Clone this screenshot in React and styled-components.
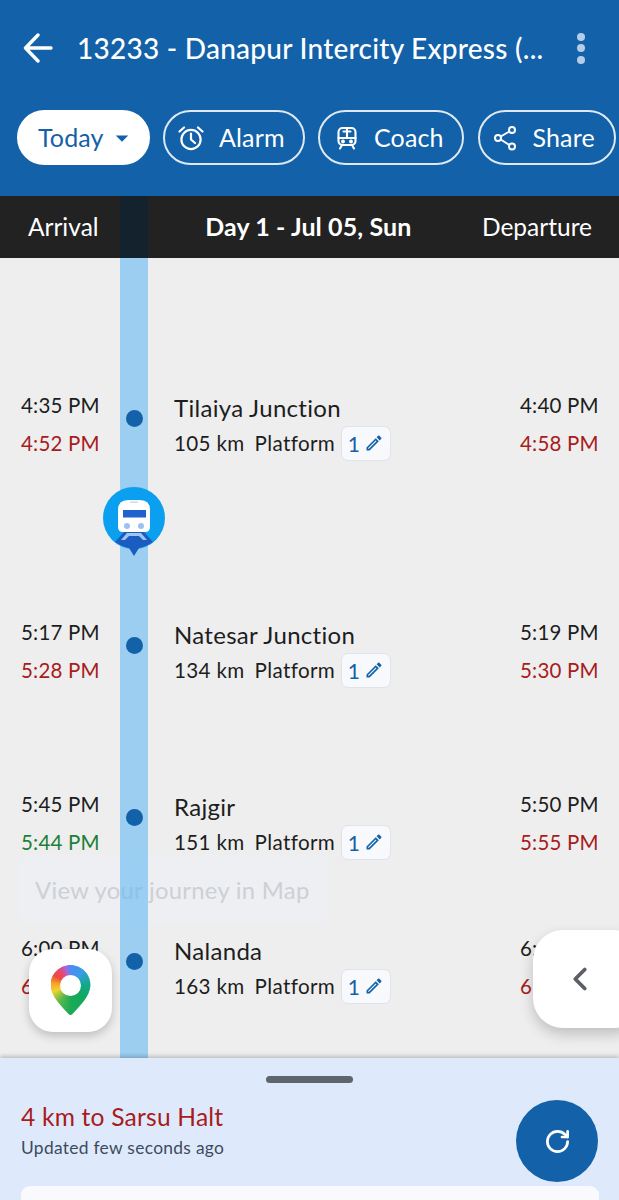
import React from "react";
import styled, { createGlobalStyle } from "styled-components";
import { RotateCw, ChevronLeft } from "lucide-react";
import { MdOutlineEdit, MdArrowDropDown } from "react-icons/md";

const Global = createGlobalStyle`
  html, body { margin: 0; padding: 0; background: #eee; }
  * { box-sizing: border-box; }
`;
const Page = styled.div`
  position: relative; width: 619px; height: 1200px; overflow: hidden;
  background: #eee; font-family: "Lato", "Noto Sans", sans-serif; color: #1d1d1d;
  display: flex; flex-direction: column;
`;
const Header = styled.header`
  height: 196px; background: #1361a8; color: #fff; flex: none;
`;
const TitleBar = styled.div`
  height: 110px; display: flex; align-items: center; padding: 0 0 14px 23px;
`;
const Title = styled.h1`
  margin: 0 0 0 24px; width: 470px; font-size: 28px; font-weight: 500; white-space: nowrap; letter-spacing: .25px;
`;
const Dots = styled.div`
  margin-left: 30px; display: flex; flex-direction: column; gap: 3.5px;
  i { width: 8px; height: 8px; border-radius: 50%; background: #b5cde6; display: block; }
`;
const Pills = styled.div`
  display: flex; padding-left: 17px; gap: 13.5px; height: 55px;
`;
const Pill = styled.div`
  height: 55px; width: ${p => p.$w}px; flex: none; border-radius: 28px;
  display: flex; align-items: center; padding: 0 0 2px ${p => p.$pad}px; gap: ${p => p.$gap}px;
  font-size: 25px; letter-spacing: .15px;
  border: 2px solid ${p => p.$solid ? "#fff" : "#dfe9f4"};
  background: ${p => p.$solid ? "#fff" : "transparent"};
  color: ${p => p.$solid ? "#1361a8" : "#fff"};
  svg { flex: none; margin-top: 2px; }
`;
const DayBar = styled.div`
  height: 62px; flex: none; background: #222; color: #fff; display: flex; align-items: center;
  justify-content: space-between; padding: 0 27px 2px 28px; font-size: 24.5px;
  b { font-weight: 700; font-size: 25px; margin-left: 36px; letter-spacing: .1px; }
`;
const Timeline = styled.main`
  flex: 1; position: relative; padding-top: 135px;
`;
const Rail = styled.div`
  position: absolute; left: 120px; width: 28px; top: 196px; height: 862px; z-index: 2;
  background: rgba(104,186,240,.62);
  &::before { content: ""; position: absolute; left: 0; right: 0; top: 0; height: 62px; background: #14222d; }
`;
const Row = styled.section`
  height: 62px; margin-bottom: ${p => p.$after}px; display: grid;
  grid-template-columns: 121px 27px 1fr 110px; position: relative; z-index: 3;
`;
const Times = styled.div`
  display: flex; flex-direction: column; gap: 13px; font-size: 20.5px; line-height: 25px;
  padding-left: ${p => p.$left}px; letter-spacing: .2px; white-space: nowrap;
`;
const Late = styled.span`
  color: ${p => p.$ok ? "#1b7f39" : "#a81c1c"};
`;
const DotCell = styled.div`
  display: flex; justify-content: center; padding-top: 17px;
  i { width: 17px; height: 17px; background: #1361a8; border-radius: 50%; display: block; }
`;
const Info = styled.div`
  padding-left: 26px;
`;
const Station = styled.div`
  font-size: 24px; line-height: 30px; letter-spacing: .3px;
`;
const Meta = styled.div`
  display: flex; align-items: center; margin-top: 3px; font-size: 20.6px; letter-spacing: .35px; height: 34px;
  span + span { margin-left: 10px; }
`;
const Platform = styled.div`
  margin-left: 6px; width: 50px; height: 35px; border-radius: 7px; background: #f8f9fc; border: 1.5px solid #dfe3ea;
  color: #1361a8; display: flex; align-items: center; justify-content: center; gap: 4px; font-size: 21px;
`;
const Marker = styled.svg`
  position: absolute; left: 102px; top: 486px; z-index: 4;
`;
const Toast = styled.div`
  position: absolute; left: 18px; top: 855px; width: 311px; height: 70px; border-radius: 12px;
  background: #edeff3; color: #cdd0d4; font-size: 23.8px; display: flex; align-items: center; padding-left: 17px;
  letter-spacing: .3px; z-index: 1;
`;
const MapBtn = styled.div`
  position: absolute; left: 29px; top: 949px; width: 83px; height: 83px; border-radius: 24px;
  background: #fff; box-shadow: 0 4px 10px rgba(0,0,0,.2); z-index: 4; display: flex; align-items: center; justify-content: center;
`;
const PinShape = styled.div`
  position: relative; width: 40px; height: 50px; margin-top: -1px;
  clip-path: path("M20 0 C31 0 40 9 40 20 C40 31 29 41 22 49 Q20 51 18 49 C11 41 0 31 0 20 C0 9 9 0 20 0Z");
  background: conic-gradient(from 0deg at 20px 20px, #4a8df2 0deg, #3b9be6 40deg, #14a890 85deg, #10a860 130deg, #1aaa55 180deg, #5eb84a 215deg, #f2d22e 250deg, #f7a32a 275deg, #ee4a3c 300deg, #e4487a 325deg, #a06ae0 345deg, #4a8df2 360deg);
  &::after {
    content: ""; position: absolute; left: 9.5px; top: 9.5px; width: 21px; height: 21px; border-radius: 50%; background: #fff;
  }
`;
const SideTab = styled.div`
  position: absolute; left: 533px; top: 930px; width: 110px; height: 98px; border-radius: 30px;
  background: #fff; box-shadow: 0 6px 14px rgba(0,0,0,.2); z-index: 4; display: flex; align-items: center; padding-left: 28px; color: #5c5f66;
`;
const Sheet = styled.footer`
  height: 142px; flex: none; position: relative; z-index: 3; background: #deeafc; box-shadow: 0 -2px 4px rgba(0,0,0,.2);
  padding: 40px 21px 0;
`;
const Handle = styled.div`
  position: absolute; top: 18px; left: 266px; width: 87px; height: 7px; border-radius: 4px; background: #5f656c;
`;
const Distance = styled.div`
  color: #a81c1c; font-size: 24.6px; line-height: 38px; letter-spacing: .2px;
`;
const Updated = styled.div`
  color: #3d4a5c; font-size: 17.4px; line-height: 24px; letter-spacing: .3px;
`;
const Refresh = styled.div`
  position: absolute; left: 516px; top: 42px; width: 82px; height: 82px; border-radius: 50%; background: #1361a8; color: #fff;
  display: flex; align-items: center; justify-content: center; z-index: 1;
`;
const Card = styled.div`
  position: absolute; left: 21px; width: 578px; top: 128px; height: 40px; background: #f9f9fe; border-radius: 9px;
`;

const stops = [
  { t: "Tilaiya Junction", k: "105 km", a: "4:35 PM", al: "4:52 PM", d: "4:40 PM", dl: "4:58 PM", after: 165 },
  { t: "Natesar Junction", k: "134 km", a: "5:17 PM", al: "5:28 PM", d: "5:19 PM", dl: "5:30 PM", after: 110 },
  { t: "Rajgir", k: "151 km", a: "5:45 PM", al: "5:44 PM", ok: true, d: "5:50 PM", dl: "5:55 PM", after: 82 },
  { t: "Nalanda", k: "163 km", a: "6:00 PM", al: "6:12 PM", d: "6:05 PM", dl: "6:14 PM", after: 0 },
];

const BackIcon = () => (
  <svg width="30" height="30" viewBox="0 0 30 30" fill="none" stroke="#fff" strokeWidth="3.4" strokeLinecap="round" strokeLinejoin="round">
    <path d="M15 2 L2.5 15 L15 28 M3 15 H28" />
  </svg>
);
const AlarmIcon = () => (
  <svg width="26" height="26" viewBox="0 0 26 26" fill="none" stroke="#fff" strokeWidth="2.2" strokeLinecap="round" strokeLinejoin="round">
    <circle cx="13" cy="14.5" r="9.6" />
    <path d="M13 8.5 V14.5 L17 18 M1.5 6.5 L6 2.5 M24.5 6.5 L20 2.5" />
  </svg>
);
const CoachIcon = () => (
  <svg width="20" height="24" viewBox="0 0 20 24" fill="none" stroke="#fff" strokeWidth="2.1" strokeLinecap="round" strokeLinejoin="round">
    <rect x="1.5" y="2" width="17" height="17" rx="4" />
    <path d="M1.5 12 H18.5 M10 2 V12 M6.5 5.5 H13.5 M5 19 L3 22.5 M15 19 L17 22.5" />
    <circle cx="6" cy="15.5" r=".9" fill="#fff" />
    <circle cx="14" cy="15.5" r=".9" fill="#fff" />
  </svg>
);
const ShareIcon = () => (
  <svg width="24" height="26" viewBox="0 0 24 26" fill="none" stroke="#fff" strokeWidth="2">
    <circle cx="19" cy="5" r="3" />
    <circle cx="5" cy="13" r="3" />
    <circle cx="19" cy="21.5" r="3" />
    <path d="M7.7 11.5 L16.3 6.5 M7.7 14.5 L16.3 20" />
  </svg>
);

export default function App() {
  return (
    <Page>
      <Global />
      <Header>
        <TitleBar>
          <BackIcon />
          <Title>13233 - Danapur Intercity Express (...</Title>
          <Dots><i /><i /><i /></Dots>
        </TitleBar>
        <Pills>
          <Pill $solid $w={132.5} $pad={19} $gap={3}>Today<MdArrowDropDown size={30} /></Pill>
          <Pill $w={141.5} $pad={13} $gap={15}><AlarmIcon />Alarm</Pill>
          <Pill $w={146} $pad={17} $gap={17}><CoachIcon />Coach</Pill>
          <Pill $w={138} $pad={13} $gap={16}><ShareIcon />Share</Pill>
        </Pills>
      </Header>
      <DayBar>
        <span>Arrival</span>
        <b>Day 1 - Jul 05, Sun</b>
        <span>Departure</span>
      </DayBar>
      <Rail />
      <Timeline>
        {stops.map(s => (
          <Row key={s.t} $after={s.after}>
            <Times $left={21}>
              <span>{s.a}</span>
              <Late $ok={s.ok}>{s.al}</Late>
            </Times>
            <DotCell><i /></DotCell>
            <Info>
              <Station>{s.t}</Station>
              <Meta>
                <span>{s.k}</span>
                <span>Platform</span>
                <Platform>1<MdOutlineEdit size={20} /></Platform>
              </Meta>
            </Info>
            <Times $left={11}>
              <span>{s.d}</span>
              <Late>{s.dl}</Late>
            </Times>
          </Row>
        ))}
      </Timeline>
      <Marker width="64" height="72" viewBox="0 0 64 72">
        <circle cx="32" cy="32" r="31" fill="#0b9ff0" />
        <path d="M13 56 L22 46 H42 L51 56 Q43 61 37 62 L32 70 L27 62 Q21 61 13 56Z" fill="#1a5cc0" />
        <path d="M19 54 L25 47 H39 L45 54 H41 L37 50 H27 L23 54Z" fill="#9fc4f2" />
        <path d="M16 24 Q16 14 26 14 H38 Q48 14 48 24 V41 Q48 46 43 46 H21 Q16 46 16 41Z" fill="#fff" />
        <rect x="28" y="15.5" width="8" height="1.6" rx=".8" fill="#c9dbf4" />
        <rect x="21" y="24" width="23" height="7.5" fill="#1f63cf" />
        <circle cx="25" cy="40" r="3" fill="#9dc0f3" />
        <circle cx="39" cy="40" r="3" fill="#9dc0f3" />
      </Marker>
      <Toast>View your journey in Map</Toast>
      <MapBtn><PinShape /></MapBtn>
      <SideTab><ChevronLeft size={38} strokeWidth={2.4} /></SideTab>
      <Sheet>
        <Handle />
        <Distance>4 km to Sarsu Halt</Distance>
        <Updated>Updated few seconds ago</Updated>
        <Refresh><RotateCw size={27} strokeWidth={2.4} /></Refresh>
        <Card />
      </Sheet>
    </Page>
  );
}
